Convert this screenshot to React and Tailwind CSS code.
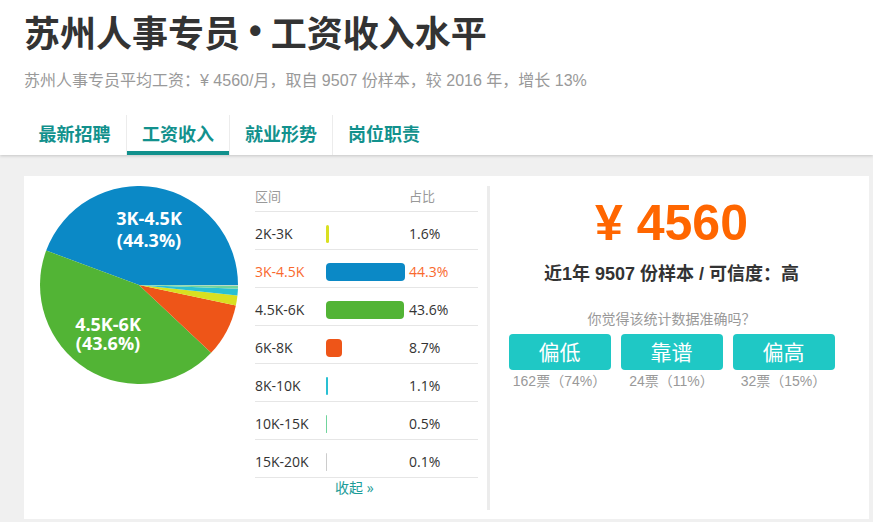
import React from 'react';

const TABS = ['最新招聘', '工资收入', '就业形势', '岗位职责'];

const RANGES = [
  { label: '2K-3K', pct: 1.6, color: '#d9e021' },
  { label: '3K-4.5K', pct: 44.3, color: '#0b89c6', hot: true },
  { label: '4.5K-6K', pct: 43.6, color: '#52b435' },
  { label: '6K-8K', pct: 8.7, color: '#ee5518' },
  { label: '8K-10K', pct: 1.1, color: '#29c0d3' },
  { label: '10K-15K', pct: 0.5, color: '#70d49c' },
  { label: '15K-20K', pct: 0.1, color: '#cccccc' },
];

const VOTES = [
  { label: '偏低', count: '162票（74%）' },
  { label: '靠谱', count: '24票（11%）' },
  { label: '偏高', count: '32票（15%）' },
];

// pie slices, biggest first, counterclockwise from 3 o'clock
function Pie() {
  const cx = 99, cy = 99, r = 99;
  const total = RANGES.reduce((s, x) => s + x.pct, 0);
  const sorted = [...RANGES].sort((a, b) => b.pct - a.pct);
  let start = 0;
  const slices = sorted.map(s => {
    const sweep = (s.pct / total) * Math.PI * 2;
    const a0 = start, a1 = start + sweep;
    start = a1;
    const x0 = cx + r * Math.cos(a0), y0 = cy - r * Math.sin(a0);
    const x1 = cx + r * Math.cos(a1), y1 = cy - r * Math.sin(a1);
    const large = sweep > Math.PI ? 1 : 0;
    return (
      <path
        key={s.label}
        d={`M${cx},${cy} L${x0},${y0} A${r},${r} 0 ${large} 0 ${x1},${y1} Z`}
        fill={s.color}
      />
    );
  });
  return (
    <svg width="198" height="198" viewBox="0 0 198 198" className="shrink-0">
      {slices}
      <g fill="#fff" fontSize="18" fontWeight="700" textAnchor="middle" dominantBaseline="central" fontFamily="'Open Sans', sans-serif">
        <text x="109" y="32">3K-4.5K</text>
        <text x="109" y="54">(44.3%)</text>
        <text x="68" y="138">4.5K-6K</text>
        <text x="68" y="157">(43.6%)</text>
      </g>
    </svg>
  );
}

export default function App() {
  return (
    <div className="w-[873px] h-[522px] overflow-hidden bg-[#f0f0f0] font-['Liberation_Sans','Noto_Sans_CJK_SC',sans-serif]">
      {/* cabecera */}
      <div className="bg-white px-[24px] pt-[11px] shadow-[0_1px_3px_rgba(0,0,0,0.18)] relative">
        <h1 className="h-[40px] flex items-center text-[36px] font-bold text-[#333] font-['Noto_Sans_CJK_SC',sans-serif]">
          <span>苏州人事专员</span>
          <span className="mx-[9px] font-['Liberation_Sans',sans-serif]">•</span>
          <span>工资收入水平</span>
        </h1>
        <p className="mt-[20px] text-[16px] leading-[20px] text-[#999]">
          苏州人事专员平均工资：¥ 4560/月，取自 9507 份样本，较 2016 年，增长 13%
        </p>
        <div className="mt-[24px] flex -ml-px">
          {TABS.map((t, i) => (
            <div
              key={t}
              className={`w-[103px] h-[40px] flex flex-col ${i > 0 ? 'border-l border-[#ececec]' : ''}`}
            >
              <span className="flex-1 flex items-center justify-center text-[18px] font-bold text-[#12918d] font-['Noto_Sans_CJK_SC',sans-serif]">
                {t}
              </span>
              <span className={`h-[4px] ${i === 1 ? 'bg-[#12918d]' : ''}`} />
            </div>
          ))}
        </div>
      </div>

      {/* tarjeta */}
      <div className="ml-[24px] mt-[21px] w-[845px] h-[343px] bg-white flex items-start">
        <div className="ml-[16px] mt-[10px]">
          <Pie />
        </div>

        <div className="ml-[17px] mt-[10px] w-[223px] text-[14px] font-['Open_Sans','Noto_Sans_CJK_SC',sans-serif]">
          <div className="h-[26px] flex border-b border-[#e6e6e6] text-[#999] text-[13px] leading-[20px]">
            <span className="w-[154px]">区间</span>
            <span>占比</span>
          </div>
          {RANGES.map(r => (
            <div
              key={r.label}
              className={`h-[38px] pt-[6px] flex items-center border-b border-[#e6e6e6] ${r.hot ? 'text-[#f9692e]' : 'text-[#333]'}`}
            >
              <span className="w-[71px]">{r.label}</span>
              <span className="w-[83px] flex">
                <span
                  className="h-[18px] rounded-[4px]"
                  style={{ width: `${(r.pct / 44.3) * 79}px`, background: r.color }}
                />
              </span>
              <span>{r.pct}%</span>
            </div>
          ))}
          <div className="pl-[80px] text-[14px] leading-[20px] text-[#1b9c98]">收起 »</div>
        </div>

        <div className="ml-[9px] mt-[10px] w-[3px] h-[324px] bg-[#ececec]" />

        <div className="w-[363px] flex flex-col items-center">
          <div className="mt-[19px] h-[56px] leading-[56px] text-[50px] font-bold text-[#ff6600]">¥ 4560</div>
          <div className="mt-[11px] text-[18px] leading-[24px] font-bold text-[#333]">
            近1年 9507 份样本 / 可信度：高
          </div>
          <div className="mt-[23px] text-[14px] leading-[20px] text-[#999]">你觉得该统计数据准确吗？</div>
          <div className="mt-[5px] flex gap-[10px]">
            {VOTES.map(v => (
              <div key={v.label} className="flex flex-col items-center">
                <button className="w-[102px] h-[36px] rounded-[4px] bg-[#1fc8c5] text-white text-[21px] font-['Noto_Sans_CJK_SC',sans-serif]">
                  {v.label}
                </button>
                <span className="mt-[2px] text-[14px] leading-[18px] text-[#999]">{v.count}</span>
              </div>
            ))}
          </div>
        </div>
      </div>
    </div>
  );
}
